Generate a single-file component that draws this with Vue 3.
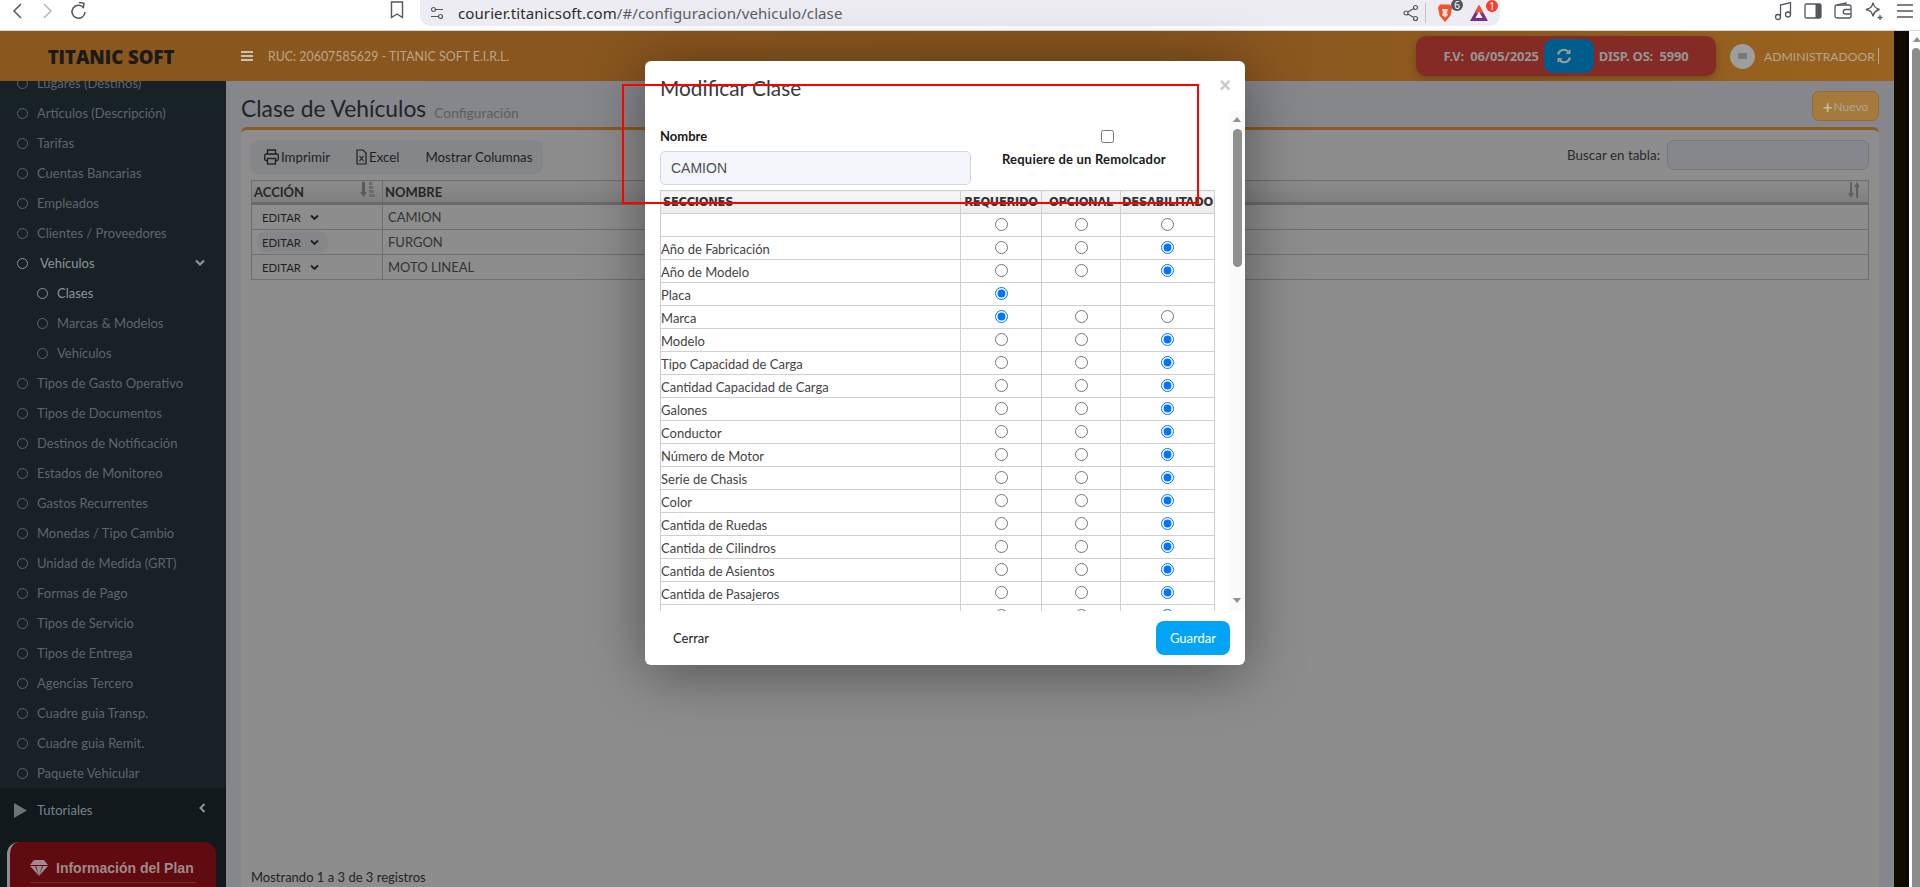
<template>
  <div class="page">
    <!-- barra del navegador -->
    <div class="browser">
      <div class="nav-btns">
        <svg width="14" height="20" viewBox="0 0 14 20"><path d="M10 3 3 10l7 7" fill="none" stroke="#55565c" stroke-width="1.5" /></svg>
        <svg width="14" height="20" viewBox="0 0 14 20"><path d="M4 3l7 7-7 7" fill="none" stroke="#b5b6ba" stroke-width="1.5" /></svg>
        <svg width="18" height="20" viewBox="0 0 18 20"><path d="M14.5 6.5A6.5 6.5 0 1 0 16 11" fill="none" stroke="#55565c" stroke-width="1.5" /><path d="M10 1.5l5 .8-.8 5" fill="none" stroke="#55565c" stroke-width="1.5" /></svg>
      </div>
      <svg class="bookmark" width="14" height="18" viewBox="0 0 14 18"><path d="M1.5 1h11v15.5L7 13l-5.500 3.500z" fill="none" stroke="#55565c" stroke-width="1.400" /></svg>
      <div class="url-pill">
        <svg width="14" height="14" viewBox="0 0 14 14"><g fill="none" stroke="#55565c" stroke-width="1.200"><circle cx="3.500" cy="3.500" r="2" /><circle cx="10.500" cy="10.500" r="2" /><path d="M6 3.500h7M1 10.500h7" /></g></svg>
        <span class="url"><span class="url-host">courier.titanicsoft.com</span>/#/configuracion/vehiculo/clase</span>
        <svg class="share" width="16" height="18" viewBox="0 0 16 18"><g fill="none" stroke="#55565c" stroke-width="1.200"><circle cx="3" cy="9" r="2" /><circle cx="12.500" cy="3.500" r="2" /><circle cx="12.500" cy="14.500" r="2" /><path d="M4.800 8l6-3.500M4.800 10l6 3.500" /></g></svg>
        <i class="pill-sep"></i>
        <span class="ext">
          <svg width="16" height="20" viewBox="0 0 16 20"><path d="M3 1.500h10l2 3-1.500 8L8 19l-5.500-6.500L1 4.500z" fill="#f4512a" /><path d="M5 6h6l-1 4 1 2-3 2.500L5 12l1-2z" fill="#ffd9c9" /></svg>
          <b class="badge grey">6</b>
        </span>
        <span class="ext ext-bat">
          <svg width="20" height="18" viewBox="0 0 20 18"><path d="M10 1 19 17H1z" fill="#7a2b8e" /><path d="M10 1 14.500 9H5.500z" fill="#f5502f" /><path d="M10 7.500 13.500 14h-7z" fill="#fff" /></svg>
          <b class="badge red">1</b>
        </span>
      </div>
      <div class="tools">
        <svg width="18" height="20" viewBox="0 0 18 20"><g fill="none" stroke="#55565c" stroke-width="1.300"><circle cx="4" cy="16" r="2.500" /><circle cx="14" cy="13.500" r="2.500" /><path d="M6.500 16V4l10-2.500v12" /></g></svg>
        <svg width="18" height="18" viewBox="0 0 18 18"><rect x="1" y="2" width="16" height="14" rx="1.500" fill="none" stroke="#55565c" stroke-width="1.300" /><rect x="11.500" y="2" width="5.500" height="14" fill="#55565c" /></svg>
        <svg width="18" height="18" viewBox="0 0 18 18"><g fill="none" stroke="#55565c" stroke-width="1.300"><rect x="1" y="3" width="16" height="13" rx="2" /><path d="M17 7.500h-5.500a2 2 0 0 0 0 4.500H17M3 3l9-2v2" /></g></svg>
        <svg width="20" height="20" viewBox="0 0 20 20"><path d="M9 1.500c.8 4.500 2.500 6 6.500 7-4 1-5.700 2.500-6.500 7-.8-4.500-2.500-6-7-7 4.500-1 6.200-2.500 7-7z" fill="none" stroke="#55565c" stroke-width="1.300" /><path d="M16 14v5M13.500 16.500h5" stroke="#55565c" stroke-width="1.300" /></svg>
        <svg width="18" height="16" viewBox="0 0 18 16"><path d="M1 2h16M1 8h16M1 14h16" stroke="#55565c" stroke-width="1.400" /></svg>
      </div>
    </div>

    <div class="window">
      <div class="app">
        <header class="topbar">
          <div class="brand">TITANIC SOFT</div>
          <svg class="burger" width="12" height="10" viewBox="0 0 12 10"><path d="M0 1h12M0 5h12M0 9h12" stroke="#c9c2b6" stroke-width="1.800" /></svg>
          <span class="ruc">RUC: 20607585629 - TITANIC SOFT E.I.R.L.</span>
          <div class="plan-pill">
            <span>F.V:&nbsp; 06/05/2025</span>
            <button class="sync">
              <svg width="16" height="16" viewBox="0 0 16 16"><g fill="none" stroke="#9a9a9a" stroke-width="2.200"><path d="M2 6.500A6 6 0 0 1 12.500 4" /><path d="M14 9.500A6 6 0 0 1 3.500 12" /></g><path d="M14.500 1v5h-5zM1.500 15v-5h5z" fill="#9a9a9a" /></svg>
            </button>
            <span>DISP. OS:&nbsp; 5990</span>
          </div>
          <span class="avatar"><i></i></span>
          <span class="user">ADMINISTRADOOR</span>
          <i class="user-sep"></i>
        </header>

        <div class="below">
          <aside class="sidebar">
            <nav class="menu">
              <a v-for="item in menu" :key="item.label + item.level" class="menu-item" :class="{ sub: item.level, active: item.active }">
                <i class="dot"></i>
                <span>{{ item.label }}</span>
                <svg v-if="item.open" class="caret" width="10" height="8" viewBox="0 0 10 8"><path d="M1 1.500l4 4 4-4" fill="none" stroke="#8d9598" stroke-width="2.200" /></svg>
              </a>
            </nav>
            <div class="menu-bottom">
              <div class="tutorials">
                <svg width="13" height="15" viewBox="0 0 13 15"><path d="M0 0l13 7.500L0 15z" fill="#6b7478" /></svg>
                <span>Tutoriales</span>
                <svg class="caret-left" width="7" height="10" viewBox="0 0 7 10"><path d="M5.500 1l-4 4 4 4" fill="none" stroke="#8d9598" stroke-width="2" /></svg>
              </div>
              <div class="plan-card">
                <div class="plan-title">
                  <svg width="18" height="16" viewBox="0 0 18 16"><path d="M4 0h10l4 5H0zM0 6h5l4 10zM6 6h6l-3 10zM13 6h5L9 16z" fill="#a08a8c" /></svg>
                  <span>Información del Plan</span>
                </div>
              </div>
            </div>
          </aside>

          <main class="main">
            <div class="title-row">
              <h1>Clase de Vehículos</h1>
              <small>Configuración</small>
              <button class="btn-new"><b>+</b>Nuevo</button>
            </div>
            <section class="card">
              <div class="card-top">
                <div class="toolbar">
                  <span class="tool">
                    <svg width="15" height="16" viewBox="0 0 15 16"><g fill="none" stroke="#1f1f1f" stroke-width="1.300"><path d="M3.500 5V1h8v4" /><rect x=".7" y="5" width="13.600" height="6.500" rx="1.500" /><rect x="3.500" y="9.500" width="8" height="5.500" fill="#84868a" /></g></svg>
                    Imprimir
                  </span>
                  <span class="tool">
                    <svg width="11" height="16" viewBox="0 0 11 16"><g fill="none" stroke="#1f1f1f" stroke-width="1.200"><path d="M1 1h6l3 3v11H1z" /><path d="M3.500 7l4 5M7.500 7l-4 5" /></g></svg>
                    Excel
                  </span>
                  <span class="tool">Mostrar Columnas</span>
                </div>
                <label class="search">Buscar en tabla: <input type="text" /></label>
              </div>
              <table class="grid">
                <thead>
                  <tr>
                    <th class="col-action">
                      ACCIÓN
                      <svg class="sort" width="15" height="15" viewBox="0 0 15 15"><path d="M2 0h3v10h2L3.500 15 0 10h2z" fill="#5a5a5a" /><path d="M9 0h3v3H9zM9 4h4v3H9zM9 8h5v3H9zM9 12h6v3H9z" fill="#6a6a6a" /></svg>
                    </th>
                    <th>
                      NOMBRE
                      <svg class="sort" width="14" height="16" viewBox="0 0 14 16"><path d="M3 0h2v11h2l-3 5-3-5h2z" fill="#5f5f5f" /><path d="M10 0l3 5h-2v11H9V5H7z" fill="#5f5f5f" /></svg>
                    </th>
                  </tr>
                </thead>
                <tbody>
                  <tr v-for="(name, i) in classes" :key="name">
                    <td class="action-cell"><span class="edit" :class="{ hover: i === 1 }">EDITAR <svg width="9" height="7" viewBox="0 0 9 7"><path d="M1 1.500l3.500 3.500L8 1.500" fill="none" stroke="#1f1f1f" stroke-width="1.800" /></svg></span></td>
                    <td class="name-cell">{{ name }}</td>
                  </tr>
                </tbody>
              </table>
              <div class="records">Mostrando 1 a 3 de 3 registros</div>
            </section>
          </main>
        </div>
      </div>
      <div class="strip"></div>
      <div class="page-scroll">
        <i class="arrow-up"></i>
        <i class="page-thumb"></i>
      </div>

      <!-- modal -->
      <div class="backdrop">
        <div class="modal">
          <div class="modal-head">
            <h2>Modificar Clase</h2>
            <span class="close">×</span>
          </div>
          <div class="modal-body">
            <div class="modal-scroll">
              <div class="form-row">
                <div class="field">
                  <label>Nombre</label>
                  <input type="text" value="CAMION" />
                </div>
                <div class="trailer">
                  <input type="checkbox" />
                  <label>Requiere de un Remolcador</label>
                </div>
              </div>
              <table class="sections">
                <thead>
                  <tr><th class="c-name">SECCIONES</th><th class="c-req">REQUERIDO</th><th class="c-opt">OPCIONAL</th><th>DESABILITADO</th></tr>
                </thead>
                <tbody>
                  <tr v-for="(row, i) in sections" :key="i">
                    <td class="sec-name">{{ row.name }}</td>
                    <td v-for="opt in ['r', 'o', 'd']" :key="opt" class="radio-cell">
                      <input v-if="!row.only || row.only === opt" type="radio" :name="'sec' + i" :checked="row.value === opt" />
                    </td>
                  </tr>
                </tbody>
              </table>
            </div>
            <div class="modal-scrollbar">
              <i class="arrow-up"></i>
              <i class="thumb"></i>
              <i class="arrow-down"></i>
            </div>
          </div>
          <div class="modal-foot">
            <button class="btn-close">Cerrar</button>
            <button class="btn-save">Guardar</button>
          </div>
        </div>
      </div>
      <!-- recuadro rojo de la captura -->
      <div class="red-box"></div>
    </div>
  </div>
</template>

<script setup>
const labels = [
  ['Lugares (Destinos)'], ['Artículos (Descripción)'], ['Tarifas'], ['Cuentas Bancarias'], ['Empleados'],
  ['Clientes / Proveedores'], ['Vehículos', 0, true, true], ['Clases', 1, true], ['Marcas & Modelos', 1], ['Vehículos', 1],
  ['Tipos de Gasto Operativo'], ['Tipos de Documentos'], ['Destinos de Notificación'], ['Estados de Monitoreo'],
  ['Gastos Recurrentes'], ['Monedas / Tipo Cambio'], ['Unidad de Medida (GRT)'], ['Formas de Pago'], ['Tipos de Servicio'],
  ['Tipos de Entrega'], ['Agencias Tercero'], ['Cuadre guia Transp.'], ['Cuadre guia Remit.'], ['Paquete Vehicular']
]
const menu = labels.map(([label, level = 0, active = false, open = false]) => ({ label, level, active, open }))

const classes = ['CAMION', 'FURGON', 'MOTO LINEAL']

const sections = [
  { name: '', value: '' },
  { name: 'Año de Fabricación', value: 'd' },
  { name: 'Año de Modelo', value: 'd' },
  { name: 'Placa', value: 'r', only: 'r' },
  { name: 'Marca', value: 'r' },
  { name: 'Modelo', value: 'd' },
  { name: 'Tipo Capacidad de Carga', value: 'd' },
  { name: 'Cantidad Capacidad de Carga', value: 'd' },
  { name: 'Galones', value: 'd' },
  { name: 'Conductor', value: 'd' },
  { name: 'Número de Motor', value: 'd' },
  { name: 'Serie de Chasis', value: 'd' },
  { name: 'Color', value: 'd' },
  { name: 'Cantida de Ruedas', value: 'd' },
  { name: 'Cantida de Cilindros', value: 'd' },
  { name: 'Cantida de Asientos', value: 'd' },
  { name: 'Cantida de Pasajeros', value: 'd' },
  { name: '', value: 'd' }
]
</script>

<style>
html, body { margin: 0; overflow: hidden; }
</style>

<style scoped>
.page {
  width: 1920px;
  height: 887px;
  overflow: hidden;
  font-family: Lato, "Noto Sans", sans-serif;
  font-size: 13px;
  background: #fff;
}

/* Navegador */
.browser {
  height: 30px;
  border-bottom: 1px solid #d8d8d8;
  display: flex;
  align-items: flex-start;
  position: relative;
  box-sizing: content-box;
}
.nav-btns {
  width: 390px;
  display: flex;
  gap: 15px;
  padding: 1px 0 0 11px;
  box-sizing: border-box;
}
.bookmark { margin-top: 1px; }
.url-pill {
  margin-left: 16px;
  width: 1080px;
  height: 26px;
  background: #edecf2;
  border-radius: 0 0 10px 10px;
  display: flex;
  align-items: center;
  padding: 0 7px 0 10px;
  box-sizing: border-box;
  font-family: "Noto Sans", sans-serif;
}
.url {
  margin-left: 14px;
  font-size: 15px;
  letter-spacing: .1px;
  color: #5c5d63;
  flex: 1;
}
.url-host { color: #2b2c30; }
.pill-sep { width: 1px; height: 20px; background: #c2c2c8; margin: 0 11px 0 6px; }
.ext { position: relative; display: flex; width: 32px; }
.ext-bat { width: 24px; margin-left: 0; }
.badge {
  position: absolute;
  top: -4px;
  right: 6px;
  min-width: 12px;
  height: 12px;
  border-radius: 7px;
  font: 400 10px/12px "Noto Sans", sans-serif;
  text-align: center;
  color: #fff;
}
.badge.grey { background: #55565c; }
.badge.red { background: #f4402f; right: -5px; }
.tools {
  margin-left: 274px;
  display: flex;
  align-items: center;
  gap: 12px;
  height: 22px;
}

.window { position: relative; display: flex; height: 856px; }
.app { width: 1894px; display: flex; flex-direction: column; }
.strip { width: 15px; background: #0f0b00; }
.page-scroll { width: 11px; padding-left: 3px; box-sizing: border-box; position: relative; background: #fff; }
.page-scroll .arrow-up { position: absolute; top: 6px; left: 4px; }
.page-thumb { display: block; margin-top: 17px; height: 839px; background: #8c8c8c; border-radius: 4px 4px 0 0; }
.arrow-up, .arrow-down { display: block; width: 0; height: 0; border-left: 4px solid transparent; border-right: 4px solid transparent; }
.arrow-up { border-bottom: 5px solid #8f8f8f; }
.arrow-down { border-top: 5px solid #8f8f8f; }

/* Cabecera */
.topbar {
  height: 50px;
  flex: none;
  background: linear-gradient(90deg, #8a571e, #87551f 60%, #99621f);
  display: flex;
  align-items: center;
}
.brand {
  width: 222px;
  margin-right: 4px;
  text-align: center;
  font: 800 18.5px "Open Sans", sans-serif;
  color: #1b1a18;
}
.burger { margin-left: 15px; }
.ruc { margin-left: 15px; color: #b9a68b; font-size: 12.4px; flex: 1; }
.plan-pill {
  width: 300px;
  height: 40px;
  background: #852b26;
  border-radius: 10px;
  box-shadow: 0 3px 8px rgba(0, 0, 0, .2);
  display: flex;
  align-items: center;
  justify-content: center;
  gap: 5px;
  color: #959595;
  font-weight: 700;
  font-size: 13px;
  letter-spacing: -.2px;
  font-family: "Noto Sans", sans-serif;
  margin-right: 14px;
}
.sync {
  width: 50px;
  height: 34px;
  border: 0;
  border-radius: 9px;
  background: #005c8c;
  display: flex;
  align-items: center;
  padding: 0 0 0 12px;
}
.avatar {
  width: 25px;
  height: 25px;
  border-radius: 50%;
  background: #9e9e9e;
  display: flex;
  align-items: center;
  justify-content: center;
}
.avatar i { width: 9px; height: 6px; background: #7a7a7a; }
.user { margin-left: 9px; color: #b5a68f; font-size: 12.2px; }
.user-sep { width: 1px; height: 16px; background: #b5a68f; margin: 0 15px 0 3px; }

/* Menu lateral */
.below { flex: 1; display: flex; min-height: 0; }
.sidebar {
  width: 226px;
  flex: none;
  background: #182126;
  display: flex;
  flex-direction: column;
  overflow: hidden;
}
.menu { margin-top: -13px; }
.menu-item {
  height: 30px;
  display: flex;
  align-items: center;
  padding-left: 17px;
  color: #5c676c;
  position: relative;
}
.menu-item.sub { padding-left: 37px; }
.menu-item.active { color: #8d9598; }
.dot {
  width: 9px;
  height: 9px;
  border: 1.500px solid currentColor;
  border-radius: 50%;
  margin-right: 9px;
}
.menu-item.active:not(.sub) .dot { margin-right: 12px; }
.caret { position: absolute; right: 21px; top: 11px; }
.menu-bottom { flex: 1; background: #11191d; }
.tutorials {
  height: 44px;
  margin-top: 0;
  display: flex;
  align-items: center;
  color: #78838a;
  padding-left: 14px;
  gap: 10px;
  position: relative;
}
.caret-left { position: absolute; right: 20px; top: 15px; }
.plan-card {
  margin: 10px 10px 0 7px;
  height: 60px;
  background: #5f0b10;
  border-left: 3px solid #8f8f8f;
  border-radius: 12px 12px 0 0;
  padding: 18px 20px 0 20px;
  box-sizing: border-box;
}
.plan-title {
  display: flex;
  align-items: center;
  gap: 8px;
  font: 700 14px "Liberation Sans", sans-serif;
  color: #a08a8c;
  padding-bottom: 6px;
  border-bottom: 1px solid #7a2a2e;
}

/* Contenido */
.main {
  flex: 1;
  background: #85878c;
  padding: 0 15px;
  display: flex;
  flex-direction: column;
  min-width: 0;
}
.title-row {
  height: 46px;
  padding-top: 10px;
  box-sizing: border-box;
  display: flex;
  align-items: flex-start;
  flex: none;
}
.title-row h1 {
  margin: -1px 0 0;
  font-weight: 400;
  font-size: 22.8px;
  line-height: 36px;
  color: #232426;
}
.title-row small {
  margin: 13px 0 0 8px;
  font-size: 13.8px;
  color: #5c5e62;
}
.btn-new {
  margin-left: auto;
  width: 67px;
  height: 30px;
  background: #a67a3c;
  border: 1px solid #99692c;
  border-radius: 7px;
  color: #aaa79c;
  font: 400 12px Lato, sans-serif;
  padding: 0;
  display: flex;
  align-items: center;
  justify-content: center;
  gap: 1px;
}
.btn-new b { font-size: 17px; line-height: 17px; color: #c4b99f; }
.card {
  flex: 1;
  background: #8d8d8d;
  border-top: 3px solid #8e5a1f;
  border-radius: 6px 6px 0 0;
  padding: 10px 10px 2px;
  display: flex;
  flex-direction: column;
  box-sizing: border-box;
  min-height: 0;
}
.card-top { display: flex; justify-content: space-between; align-items: flex-start; }
.toolbar {
  height: 34px;
  width: 292px;
  background: #84868a;
  border-radius: 8px;
  display: flex;
  align-items: center;
  padding-left: 13px;
  box-sizing: border-box;
  gap: 26px;
  color: #1f1f1f;
  font-size: 13.300px;
}
.tool { display: inline-flex; align-items: center; gap: 2px; }
.search { display: flex; align-items: center; color: #2a2a2a; gap: 7px; height: 30px; font-size: 13.400px; }
.search input {
  width: 202px;
  height: 30px;
  background: #85878c;
  border: 1px solid #75777c;
  border-radius: 7px;
  box-sizing: border-box;
}
.grid {
  margin-top: 6px;
  width: 100%;
  border-collapse: collapse;
  table-layout: fixed;
  color: #333;
  border: 1px solid #6f6f6f;
}
.grid th {
  height: 21px;
  text-align: left;
  padding: 0 2px;
  font-weight: 700;
  color: #262626;
  border: 1px solid #6f6f6f;
  border-bottom: 3px solid #6a6a6a;
  background: linear-gradient(#8c8c8c, #7f7f7f);
  position: relative;
  font-size: 13px;
}
.col-action { width: 126px; }
.sort { position: absolute; right: 7px; top: 1px; }
.grid td { height: 24px; padding: 0; border: 1px solid #6f6f6f; }
.action-cell { padding-left: 5px !important; }
.edit {
  display: inline-flex;
  align-items: center;
  gap: 9px;
  height: 22px;
  padding: 0 9px 0 5px;
  margin-left: 0;
  font-size: 11.300px;
  border-radius: 10px;
  color: #1f1f1f;
}
.edit.hover { background: #84868a; }
.name-cell { padding-left: 5px !important; }
.records { margin-top: auto; color: #242424; line-height: 16px; }

/* Modal */
.backdrop {
  position: absolute;
  left: 0;
  top: 0;
  width: 1894px;
  height: 100%;
  padding: 30px 0 0 645px;
  box-sizing: border-box;
}
.modal {
  width: 600px;
  height: 604px;
  background: #fff;
  border-radius: 6px;
  box-shadow: 0 8px 60px rgba(0, 0, 0, .42);
  display: flex;
  flex-direction: column;
  overflow: hidden;
}
.modal-head {
  height: 50px;
  flex: none;
  display: flex;
  justify-content: space-between;
  padding: 13px 15px 0;
  box-sizing: border-box;
}
.modal-head h2 {
  margin: 0;
  font-weight: 400;
  font-size: 20.8px;
  line-height: 28px;
  color: #3a3a3a;
}
.close {
  font: 700 20px/20px "Liberation Sans", sans-serif;
  color: #c9c9c9;
  margin: 1px -1px 0 0;
}
.modal-body { height: 500px; display: flex; flex: none; }
.modal-scroll { width: 585px; padding-left: 15px; box-sizing: border-box; overflow: hidden; }
.form-row { display: flex; height: 79px; padding-top: 15px; box-sizing: border-box; }
.field { width: 311px; }
.field label { display: block; font-weight: 700; line-height: 20px; color: #1a1a1a; margin-bottom: 5px; }
.field input {
  display: block;
  width: 311px;
  height: 34px;
  box-sizing: border-box;
  background: #f4f6fb;
  border: 1px solid #ced8e8;
  border-radius: 5px;
  padding: 0 10px;
  font: 400 14px "Liberation Sans", sans-serif;
  color: #495057;
}
.trailer { margin-left: 14px; width: 245px; text-align: center; }
.trailer input { display: block; margin: 4px auto 0; width: 13px; height: 13px; }
.trailer label { display: block; margin: 8px 0 0 17px; text-align: left; font-weight: 700; color: #1a1a1a; line-height: 16px; letter-spacing: .2px; }
.sections {
  width: 555px;
  border-collapse: collapse;
  table-layout: fixed;
  color: #444;
}
.sections th {
  box-sizing: border-box;
  height: 23px;
  padding: 0;
  background: linear-gradient(#f7f7f7, #ececec);
  border: 1px solid #cfcfcf;
  font: 700 11.500px "DejaVu Sans", sans-serif;
  color: #333;
  white-space: nowrap;
  letter-spacing: -.3px;
}
.c-name { width: 300px; text-align: left; padding-left: 2px !important; }
.c-req { width: 81px; }
.c-opt { width: 79px; }
.sections td { box-sizing: border-box; height: 23px; padding: 0; border: 1px solid #cfcfcf; }
.sec-name { padding-left: 0 !important; line-height: 20px; padding-top: 1px !important; }
.radio-cell { text-align: center; }
.radio-cell input { display: block; margin: 0 auto 2px; width: 13px; height: 13px; }
.modal-scrollbar { width: 15px; background: #fafafa; position: relative; flex: none; }
.modal-scrollbar .arrow-up { position: absolute; top: 6px; left: 3px; }
.modal-scrollbar .arrow-down { position: absolute; bottom: 8px; left: 3px; }
.thumb { position: absolute; left: 3px; top: 18px; width: 9px; height: 138px; background: #8f8f8f; border-radius: 5px; }
.modal-foot {
  flex: 1;
  display: flex;
  justify-content: space-between;
  align-items: center;
  padding: 0 15px 0 15px;
}
.modal-foot button { font: 400 13px Lato, sans-serif; border: 0; }
.btn-close { background: none; color: #1a1a1a; padding: 0 13px; height: 34px; }
.btn-save { width: 74px; height: 34px; background: #03a4f5; border-radius: 8px; color: #fff; }

.red-box {
  position: absolute;
  left: 622px;
  top: 53px;
  width: 577px;
  height: 120px;
  border: 2px solid #f00;
  box-sizing: border-box;
}
</style>
